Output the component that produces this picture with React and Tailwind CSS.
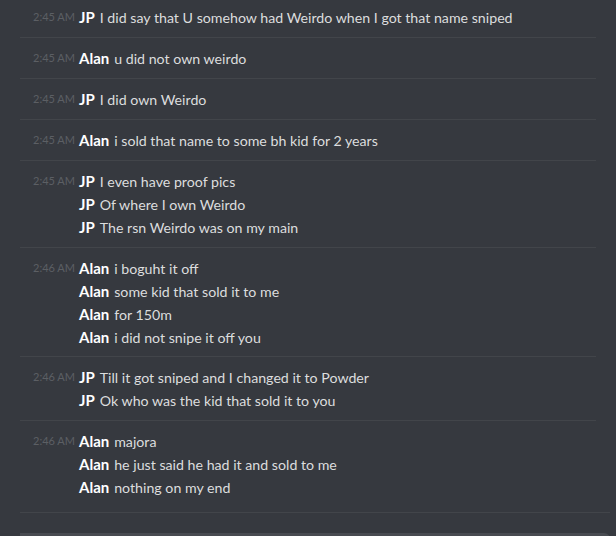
const groups = [
  { time: "2:45 AM", name: "JP", lines: ["I did say that U somehow had Weirdo when I got that name sniped"], first: true },
  { time: "2:45 AM", name: "Alan", lines: ["u did not own weirdo"] },
  { time: "2:45 AM", name: "JP", lines: ["I did own Weirdo"] },
  { time: "2:45 AM", name: "Alan", lines: ["i sold that name to some bh kid for 2 years"] },
  {
    time: "2:45 AM",
    name: "JP",
    lines: ["I even have proof pics", "Of where I own Weirdo", "The rsn Weirdo was on my main"],
  },
  {
    time: "2:46 AM",
    name: "Alan",
    lines: ["i boguht it off", "some kid that sold it to me", "for 150m", "i did not snipe it off you"],
    tight: true,
  },
  { time: "2:46 AM", name: "JP", lines: ["Till it got sniped and I changed it to Powder", "Ok who was the kid that sold it to you"] },
  {
    time: "2:46 AM",
    name: "Alan",
    lines: ["majora", "he just said he had it and sold to me", "nothing on my end"],
    last: true,
  },
];

function Group({ g }) {
  return (
    <div
      className={`${g.first ? "pt-[6px]" : "pt-[9px]"} ${
        g.last ? "pb-[13px]" : g.tight ? "pb-[7px] border-b border-[#42454a] mr-5" : "pb-[8px] border-b border-[#42454a] mr-5"
      }`}
    >
      {g.lines.map((line, i) => (
        <div key={i} className="flex items-center h-[23px]">
          <div className="w-[59px] shrink-0 pl-[13px] text-[11px] text-[#5c5f64]">
            {i === 0 ? g.time : ""}
          </div>
          <span className="font-bold text-white text-[15px]">{g.name}</span>
          <span className="ml-[5px] text-[14.2px] text-[#dcddde]">{line}</span>
        </div>
      ))}
    </div>
  );
}

export default function App() {
  return (
    <div
      className="w-[616px] h-[536px] bg-[#36393f] overflow-hidden flex flex-col"
      style={{ fontFamily: "Lato, 'Open Sans', sans-serif" }}
    >
      <div className="pl-5">
        {groups.map((g, idx) => (
          <Group key={idx} g={g} />
        ))}
        {/* last divider runs a bit wider */}
        <div className="h-px w-[590px] bg-[#42454a]" />
      </div>
      <div className="h-5 shrink-0" />
      <div className="ml-5 w-[590px] h-[6px] rounded-tr-md bg-[#484b51] shrink-0" />
    </div>
  );
}
